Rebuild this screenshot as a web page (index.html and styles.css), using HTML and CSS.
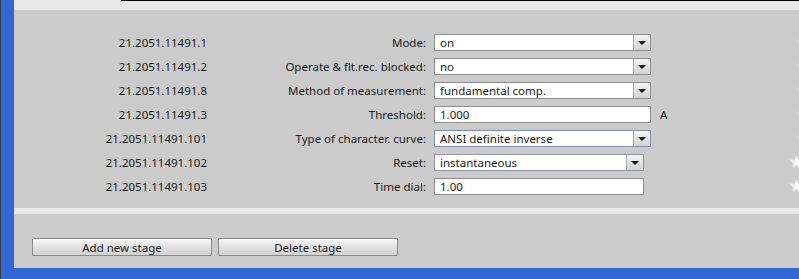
FILE: index.html
```html
<!DOCTYPE html>
<html lang="en-US">
  <head>
    <meta charset="UTF-8">
    <title>Stage settings</title>
    <link rel="stylesheet" href="styles.css">
  </head>
  <body>
    <div class="window">
      <div class="side"></div>
      <div class="main">
        <div class="tabbar"><span class="tab-line"></span></div>

        <!-- Parameter rows -->
        <div class="params">
          <div class="row">
            <span class="addr">21.2051.11491.1</span>
            <span class="label">Mode:</span>
            <div class="field select wide"><span class="value">on</span><span class="arrow"></span></div>
            <span class="star faint"></span>
          </div>
          <div class="row">
            <span class="addr">21.2051.11491.2</span>
            <span class="label">Operate &amp; flt.rec. blocked:</span>
            <div class="field select wide"><span class="value">no</span><span class="arrow"></span></div>
            <span class="star faint"></span>
          </div>
          <div class="row">
            <span class="addr">21.2051.11491.8</span>
            <span class="label">Method of measurement:</span>
            <div class="field select wide"><span class="value">fundamental comp.</span><span class="arrow"></span></div>
            <span class="star faint"></span>
          </div>
          <div class="row">
            <span class="addr">21.2051.11491.3</span>
            <span class="label">Threshold:</span>
            <div class="field wide"><span class="value">1.000</span></div>
            <span class="unit">A</span>
            <span class="star faint"></span>
          </div>
          <div class="row">
            <span class="addr">21.2051.11491.101</span>
            <span class="label">Type of character. curve:</span>
            <div class="field select wide focus"><span class="value">ANSI definite inverse</span><span class="arrow"></span></div>
            <span class="star faint"></span>
          </div>
          <div class="row">
            <span class="addr">21.2051.11491.102</span>
            <span class="label">Reset:</span>
            <div class="field select narrow soft"><span class="value">instantaneous</span><span class="arrow"></span></div>
            <span class="star"></span>
          </div>
          <div class="row">
            <span class="addr">21.2051.11491.103</span>
            <span class="label">Time dial:</span>
            <div class="field narrow"><span class="value">1.00</span></div>
            <span class="star"></span>
          </div>
        </div>

        <div class="divider"></div>

        <div class="actions">
          <button class="btn">Add new stage</button>
          <button class="btn">Delete stage</button>
        </div>
      </div>
    </div>
    <div class="statusbar"></div>
  </body>
</html>
```

FILE: styles.css
```css
/* Page setup */
html, body {
    margin: 0;
    padding: 0;
}

body {
    width: 799px;
    height: 279px;
    overflow: hidden;
    background: #cbcbcb;
    font-family: "Noto Sans", "Open Sans", sans-serif;
    font-size: 11.5px;
    color: #1c1c22;
    border-left: 1px solid #3a3a3a;
    box-sizing: border-box;
}

.window {
    display: flex;
    height: 268px;
}

/* Blue frame on the left */
.side {
    width: 13px;
    flex: none;
    background: #3366d5;
}

.main {
    flex: 1;
    display: flex;
    flex-direction: column;
    min-width: 0;
    overflow: hidden;
}

/* Top tab strip */
.tabbar {
    height: 10px;
    background: #e8e8e8;
    position: relative;
}

.tab-line {
    position: absolute;
    top: 0;
    left: 107px;
    right: 0;
    height: 1px;
    background: #000;
}

/* Parameter rows */
.params {
    padding: 20px 0 10px 0;
}

.row {
    display: flex;
    align-items: center;
    height: 24px;
}

.addr {
    width: 193px;
    text-align: right;
    flex: none;
}

.label {
    width: 219px;
    text-align: right;
    flex: none;
    margin-right: 8px;
}

.field {
    display: flex;
    height: 17px;
    box-sizing: border-box;
    background: #fff;
    border: 1px solid #8c8c8c;
    flex: none;
}

.field.wide {
    width: 217px;
}

.field.narrow {
    width: 210px;
}

.field.focus {
    border-color: #7d8db2;
}

.field.soft {
    border-color: #8e95a8;
}

.value {
    flex: 1;
    padding-left: 5px;
    line-height: 15px;
    white-space: nowrap;
    overflow: hidden;
}

/* Drop-down arrow button */
.arrow {
    width: 16px;
    flex: none;
    border-left: 1px solid #a8a8a8;
    background: linear-gradient(#f4f4f4, #d4d4d4);
    position: relative;
}

.arrow::after {
    content: "";
    position: absolute;
    left: 4px;
    top: 6px;
    border-left: 4px solid transparent;
    border-right: 4px solid transparent;
    border-top: 4px solid #111;
}

.unit {
    margin-left: 9px;
}

/* Favourite star, cut off at the right edge */
.star {
    margin-left: auto;
    margin-right: -6px;
    width: 17px;
    height: 17px;
    flex: none;
    background: radial-gradient(circle at 55% 50%, #ffffff 0%, #f2f2f2 35%, #bdbdbd 85%);
    clip-path: polygon(50% 0%, 61% 35%, 98% 35%, 68% 57%, 79% 91%, 50% 70%, 21% 91%, 32% 57%, 2% 35%, 39% 35%);
}

.star.faint {
    margin-right: -11px;
    background: radial-gradient(circle at 50% 50%, #d6d6d6 0%, #d0d0d0 55%, #b4b4b4 100%);
}

/* Light separator */
.divider {
    height: 6px;
    background: #e8e8e8;
}

/* Buttons */
.actions {
    display: flex;
    gap: 6px;
    padding: 24px 0 0 18px;
    flex: 1;
}

.btn {
    width: 180px;
    height: 18px;
    padding: 0;
    font-family: inherit;
    font-size: 11.5px;
    color: #1c1c22;
    border: 1px solid #8a8a8a;
    border-radius: 1px;
    background: linear-gradient(#f6f6f6, #e2e2e2 50%, #d2d2d2);
    box-shadow: inset 0 1px 0 #fff;
}

/* Bottom blue frame */
.statusbar {
    height: 11px;
    background: #3366d5;
}
```
